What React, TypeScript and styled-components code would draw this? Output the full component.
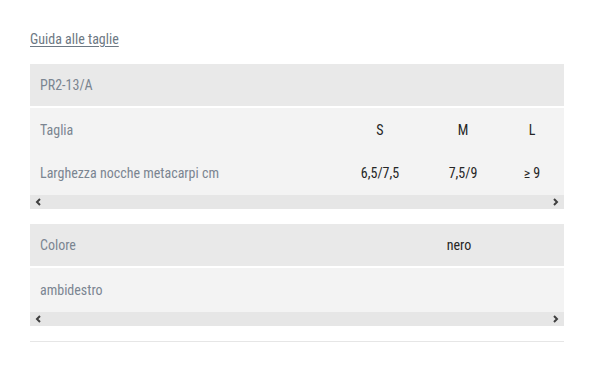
import styled, { createGlobalStyle } from 'styled-components';

const GlobalStyle = createGlobalStyle`
  body {
    margin: 0;
    background: #fff;
    font-family: "Roboto Condensed", "Roboto", "Liberation Sans", sans-serif;
    font-stretch: 80%;
  }
`;

const Page = styled.div`
  padding: 30px 36px 0 30px;
  display: flex;
  flex-direction: column;
`;

const GuideLink = styled.a`
  font-size: 14px;
  color: #6d7883;
  text-decoration: underline;
  text-underline-offset: 2px;
  line-height: 18px;
  margin-bottom: 16px;
`;

const TableBlock = styled.div`
  display: flex;
  flex-direction: column;
  margin-bottom: 15px;
`;

const Row = styled.div<{ $cols: string; $head?: boolean }>`
  display: grid;
  grid-template-columns: ${(p) => p.$cols};
  align-items: center;
  height: ${(p) => (p.$head ? '42px' : '43.5px')};
  background: ${(p) => (p.$head ? '#e9e9e9' : '#f3f3f3')};
  border-bottom: ${(p) => (p.$head ? '2px solid #fff' : 'none')};
  font-size: 14px;
`;

const Label = styled.div`
  padding-left: 10px;
  color: #7b8591;
`;

const Value = styled.div`
  text-align: center;
  color: #262626;
`;

const Scrollbar = styled.div`
  height: 14px;
  background: #e6e6e6;
  display: flex;
  align-items: center;
  justify-content: space-between;
  padding: 0 5px;
`;

// small chevrons at both ends of the horizontal scroll track
const Arrow = ({ dir }: { dir: 'left' | 'right' }) => (
  <svg width="7" height="8" viewBox="0 0 7 8">
    <path
      d={dir === 'left' ? 'M5 1 L2 4 L5 7' : 'M2 1 L5 4 L2 7'}
      fill="none"
      stroke="#3f3f3f"
      strokeWidth="2"
    />
  </svg>
);

const Divider = styled.hr`
  border: none;
  border-top: 1px solid #e6e6e6;
  margin: 0;
`;

const sizeCols = '320px 60px 106px 32px 1fr';
const colourCols = '390px 78px 1fr';

export default function App() {
  return (
    <>
      <GlobalStyle />
      <Page>
        <GuideLink href="#">Guida alle taglie</GuideLink>

        <TableBlock>
          <Row $cols={sizeCols} $head>
            <Label>PR2-13/A</Label>
          </Row>
          <Row $cols={sizeCols}>
            <Label>Taglia</Label>
            <Value>S</Value>
            <Value>M</Value>
            <Value>L</Value>
          </Row>
          <Row $cols={sizeCols}>
            <Label>Larghezza nocche metacarpi cm</Label>
            <Value>6,5/7,5</Value>
            <Value>7,5/9</Value>
            <Value>≥ 9</Value>
          </Row>
          <Scrollbar>
            <Arrow dir="left" />
            <Arrow dir="right" />
          </Scrollbar>
        </TableBlock>

        <TableBlock>
          <Row $cols={colourCols} $head>
            <Label>Colore</Label>
            <Value>nero</Value>
          </Row>
          <Row $cols={colourCols}>
            <Label>ambidestro</Label>
          </Row>
          <Scrollbar>
            <Arrow dir="left" />
            <Arrow dir="right" />
          </Scrollbar>
        </TableBlock>

        <Divider />
      </Page>
    </>
  );
}
